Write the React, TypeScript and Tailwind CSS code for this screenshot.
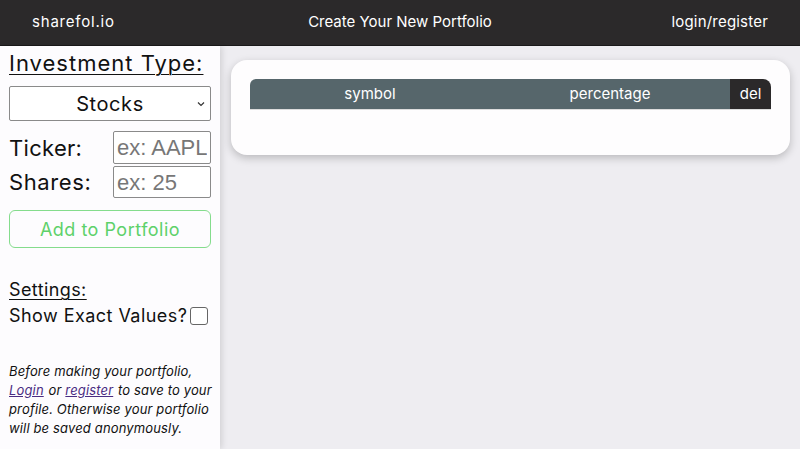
import { useState } from "react";

const font = { fontFamily: "Inter, 'Noto Sans', sans-serif" };

export default function App() {
  const [exact, setExact] = useState(false);

  return (
    <div className="w-[800px] h-[449px] flex flex-col bg-[#eeedf1] overflow-hidden" style={font}>
      <header className="h-[46px] shrink-0 grid grid-cols-3 items-center px-[32px] bg-[#2b292a] border-b border-[#1a191a] text-white text-[15px]">
        <span className="justify-self-start tracking-[0.8px]">sharefol.io</span>
        <span className="justify-self-center">Create Your New Portfolio</span>
        <span className="justify-self-end tracking-[0.2px]">login/register</span>
      </header>

      <div className="flex flex-1 min-h-0">
        <aside className="w-[220px] shrink-0 bg-[#fdfcfe] px-[9px] pt-[2px] shadow-[2px_0_6px_rgba(0,0,0,0.12)] z-10 text-[#111]">
          <h2 className="text-[22px] leading-[30px] tracking-[1px] underline underline-offset-[3px] decoration-1">Investment Type:</h2>

          <div className="mt-[8px] h-[35px] border border-[#8a8a8a] rounded-[2px] bg-white relative flex items-center justify-center">
            <span className="text-[20px] tracking-[0.6px]">Stocks</span>
            <svg className="absolute right-[5px] top-1/2 -translate-y-1/2" width="8" height="5" viewBox="0 0 8 5" fill="none">
              <path d="M1 1l3 3 3-3" stroke="#333" strokeWidth="1.2" />
            </svg>
          </div>

          <div className="mt-[10px] flex items-center justify-between">
            <label className="text-[22px] leading-[30px] tracking-[0.3px]">Ticker:</label>
            <input
              placeholder="ex: AAPL"
              className="w-[98px] h-[33px] border border-[#8a8a8a] rounded-[2px] bg-white px-[3px] text-[22px] placeholder:text-[#777] outline-none"
              style={{ fontFamily: "'Liberation Sans', Arial, sans-serif" }}
            />
          </div>
          <div className="mt-[2px] flex items-center justify-between">
            <label className="text-[22px] leading-[30px] tracking-[0.6px]">Shares:</label>
            <input
              placeholder="ex: 25"
              className="w-[98px] h-[32px] border border-[#8a8a8a] rounded-[2px] bg-white px-[3px] text-[22px] placeholder:text-[#777] outline-none"
              style={{ fontFamily: "'Liberation Sans', Arial, sans-serif" }}
            />
          </div>

          <button className="mt-[12px] w-full h-[38px] border border-[#84dc8c] rounded-[6px] text-[#5ed16a] text-[18px] tracking-[0.5px] bg-transparent">
            Add to Portfolio
          </button>

          <h3 className="mt-[29px] text-[18px] leading-[26px] tracking-[0.4px] underline underline-offset-[3px] decoration-1">Settings:</h3>
          <div className="flex items-center gap-[3px]">
            <span className="text-[18px] leading-[26px] tracking-[0.45px]">Show Exact Values?</span>
            <input
              type="checkbox"
              checked={exact}
              onChange={() => setExact(!exact)}
              className="appearance-none w-[18px] h-[18px] border border-[#666] rounded-[3px] bg-white checked:bg-[#2b292a]"
            />
          </div>

          <p className="mt-[33px] text-[13px] leading-[19px] tracking-[0.15px] italic whitespace-nowrap">
            Before making your portfolio,
            <br />
            <a className="underline text-[#4a2c82] pr-[1px]">Login</a> or{" "}
            <a className="underline text-[#4a2c82] pr-[1px]">register</a> to save to your
            <br />
            profile. Otherwise your portfolio
            <br />
            will be saved anonymously.
          </p>
        </aside>

        <main className="flex-1 pl-[11px] pr-[10px] pt-[14px]">
          <div className="bg-[#fefdfe] rounded-[16px] shadow-[0_3px_8px_rgba(0,0,0,0.22)] p-[19px] pb-[45px]">
            <div className="flex h-[31px] text-white text-[15px] border-b border-[#dcdcdc]">
              <div className="flex-1 flex items-center justify-center bg-[#56666b] rounded-tl-[6px]">symbol</div>
              <div className="flex-1 flex items-center justify-center bg-[#56666b]">percentage</div>
              <div className="w-[41px] flex items-center justify-center bg-[#2b292a] rounded-tr-[8px]">del</div>
            </div>
          </div>
        </main>
      </div>
    </div>
  );
}
